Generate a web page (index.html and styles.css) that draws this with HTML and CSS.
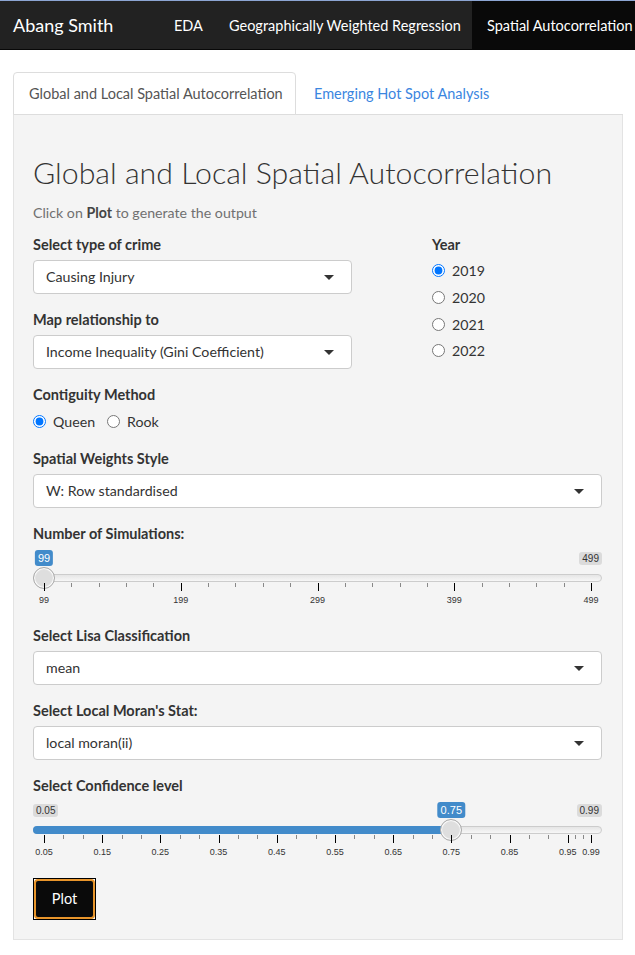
FILE: index.html
```html
<!DOCTYPE html>
<html lang="en">
<head>
<meta charset="utf-8">
<title>Abang Smith</title>
<link rel="stylesheet" href="styles.css">
</head>
<body>
<div class="topline"></div>
<nav class="navbar">
  <span class="brand">Abang Smith</span>
  <ul class="nav">
    <li class="nav-eda">EDA</li>
    <li class="nav-gwr">Geographically Weighted Regression</li>
    <li class="nav-sa active">Spatial Autocorrelation</li>
  </ul>
</nav>

<main class="container">
  <ul class="tabs">
    <li class="tab active">Global and Local Spatial Autocorrelation</li>
    <li class="tab">Emerging Hot Spot Analysis</li>
  </ul>

  <div class="well">
    <h2 class="title">Global and Local Spatial Autocorrelation</h2>
    <p class="hint">Click on <b>Plot</b> to generate the output</p>

    <div class="row">
      <div class="col-left">
        <div class="group">
          <label class="ctl-label">Select type of crime</label>
          <div class="select">Causing Injury</div>
        </div>
        <div class="group">
          <label class="ctl-label">Map relationship to</label>
          <div class="select">Income Inequality (Gini Coefficient)</div>
        </div>
      </div>
      <div class="col-right">
        <label class="ctl-label">Year</label>
        <div class="radio-stack">
          <label class="radio"><input type="radio" name="year" checked><span>2019</span></label>
          <label class="radio"><input type="radio" name="year"><span>2020</span></label>
          <label class="radio"><input type="radio" name="year"><span>2021</span></label>
          <label class="radio"><input type="radio" name="year"><span>2022</span></label>
        </div>
      </div>
    </div>

    <div class="group">
      <label class="ctl-label">Contiguity Method</label>
      <div class="radio-inline-row">
        <label class="radio"><input type="radio" name="cont" checked><span>Queen</span></label>
        <label class="radio"><input type="radio" name="cont"><span>Rook</span></label>
      </div>
    </div>

    <div class="group">
      <label class="ctl-label">Spatial Weights Style</label>
      <div class="select">W: Row standardised</div>
    </div>

    <div class="group">
      <label class="ctl-label">Number of Simulations:</label>
      <div class="slider">
        <div class="irs-line"></div>
        <span class="irs-max">499</span>
        <div class="irs-area">
          <span class="irs-single" style="left:0%">99</span>
          <span class="irs-handle" style="left:0%"></span>
          <div class="irs-grid">
            <span class="pol big" style="left:0%"></span>
            <span class="pol" style="left:5%"></span>
            <span class="pol" style="left:10%"></span>
            <span class="pol" style="left:15%"></span>
            <span class="pol" style="left:20%"></span>
            <span class="pol big" style="left:25%"></span>
            <span class="pol" style="left:30%"></span>
            <span class="pol" style="left:35%"></span>
            <span class="pol" style="left:40%"></span>
            <span class="pol" style="left:45%"></span>
            <span class="pol big" style="left:50%"></span>
            <span class="pol" style="left:55%"></span>
            <span class="pol" style="left:60%"></span>
            <span class="pol" style="left:65%"></span>
            <span class="pol" style="left:70%"></span>
            <span class="pol big" style="left:75%"></span>
            <span class="pol" style="left:80%"></span>
            <span class="pol" style="left:85%"></span>
            <span class="pol" style="left:90%"></span>
            <span class="pol" style="left:95%"></span>
            <span class="pol big" style="left:100%"></span>
            <span class="gtext" style="left:0%">99</span>
            <span class="gtext" style="left:25%">199</span>
            <span class="gtext" style="left:50%">299</span>
            <span class="gtext" style="left:75%">399</span>
            <span class="gtext" style="left:100%">499</span>
          </div>
        </div>
      </div>
    </div>

    <div class="group">
      <label class="ctl-label">Select Lisa Classification</label>
      <div class="select">mean</div>
    </div>

    <div class="group">
      <label class="ctl-label">Select Local Moran's Stat:</label>
      <div class="select">local moran(ii)</div>
    </div>

    <div class="group group-last">
      <label class="ctl-label">Select Confidence level</label>
      <div class="slider">
        <div class="irs-line"></div>
        <span class="irs-min">0.05</span>
        <span class="irs-max">0.99</span>
        <div class="irs-area">
          <div class="irs-bar" style="width:calc(74.468% + 11px)"></div>
          <span class="irs-single" style="left:74.468%">0.75</span>
          <span class="irs-handle" style="left:74.468%"></span>
          <div class="irs-grid">
            <span class="pol big" style="left:0%"></span>
            <span class="pol" style="left:3.546%"></span>
            <span class="pol" style="left:7.092%"></span>
            <span class="pol big" style="left:10.638%"></span>
            <span class="pol" style="left:14.184%"></span>
            <span class="pol" style="left:17.730%"></span>
            <span class="pol big" style="left:21.277%"></span>
            <span class="pol" style="left:24.823%"></span>
            <span class="pol" style="left:28.369%"></span>
            <span class="pol big" style="left:31.915%"></span>
            <span class="pol" style="left:35.461%"></span>
            <span class="pol" style="left:39.007%"></span>
            <span class="pol big" style="left:42.553%"></span>
            <span class="pol" style="left:46.099%"></span>
            <span class="pol" style="left:49.645%"></span>
            <span class="pol big" style="left:53.191%"></span>
            <span class="pol" style="left:56.738%"></span>
            <span class="pol" style="left:60.284%"></span>
            <span class="pol big" style="left:63.830%"></span>
            <span class="pol" style="left:67.376%"></span>
            <span class="pol" style="left:70.922%"></span>
            <span class="pol big" style="left:74.468%"></span>
            <span class="pol" style="left:78.014%"></span>
            <span class="pol" style="left:81.560%"></span>
            <span class="pol big" style="left:85.106%"></span>
            <span class="pol" style="left:88.652%"></span>
            <span class="pol" style="left:92.199%"></span>
            <span class="pol big" style="left:95.745%"></span>
            <span class="pol" style="left:97.163%"></span>
            <span class="pol" style="left:98.582%"></span>
            <span class="pol big" style="left:100%"></span>
            <span class="gtext" style="left:0%">0.05</span>
            <span class="gtext" style="left:10.638%">0.15</span>
            <span class="gtext" style="left:21.277%">0.25</span>
            <span class="gtext" style="left:31.915%">0.35</span>
            <span class="gtext" style="left:42.553%">0.45</span>
            <span class="gtext" style="left:53.191%">0.55</span>
            <span class="gtext" style="left:63.830%">0.65</span>
            <span class="gtext" style="left:74.468%">0.75</span>
            <span class="gtext" style="left:85.106%">0.85</span>
            <span class="gtext" style="left:95.745%">0.95</span>
            <span class="gtext" style="left:100%">0.99</span>
          </div>
        </div>
      </div>
    </div>

    <div class="plot-ring"><button class="btn-plot" type="button">Plot</button></div>
  </div>
</main>
</body>
</html>
```

FILE: styles.css
```css
* { box-sizing: border-box; }
html, body { margin: 0; padding: 0; }
body {
  width: 635px;
  background: #fff;
  color: #333;
  font-family: Lato, "Liberation Sans", sans-serif;
  font-size: 14px;
}

.topline { height: 1px; background: #8ca5d3; }

/* Navbar */
.navbar {
  display: flex;
  height: 49px;
  background: #222;
  border-bottom: 1px solid #080808;
  overflow: hidden;
}
.brand {
  flex: none;
  width: 159px;
  padding-left: 13px;
  color: #fff;
  font-size: 18px;
  line-height: 48px;
  white-space: nowrap;
}
.nav {
  display: flex;
  margin: 0;
  padding: 0;
  list-style: none;
}
.nav li {
  flex: none;
  padding: 0 15px;
  color: #fff;
  font-size: 14.5px;
  line-height: 50px;
  white-space: nowrap;
}
.nav .nav-eda { width: 55px; }
.nav .nav-gwr { width: 258px; }
.nav .nav-sa { width: 176px; }
.nav .active { background: #090909; }

/* Tabs */
.container { margin: 22px 12px 0 13px; }
.tabs {
  display: flex;
  height: 43px;
  margin: 0;
  padding: 0;
  list-style: none;
  border-bottom: 1px solid #ddd;
}
.tab {
  height: 43px;
  margin-right: 2px;
  padding: 10px 15px;
  border: 1px solid transparent;
  border-radius: 4px 4px 0 0;
  color: #3b86df;
  font-size: 14.5px;
  line-height: 21px;
  white-space: nowrap;
}
.tab.active {
  width: 283px;
  background: #fff;
  border-color: #ddd;
  color: #555;
}

/* Well */
.well {
  padding: 19px 20px 19px 19px;
  background: #f4f4f4;
  border: 1px solid #e3e3e3;
  border-top: none;
}
.title {
  margin: 20px 0 12px;
  color: #333;
  font-size: 30.3px;
  font-weight: 300;
  line-height: 36px;
}
.hint {
  margin: 0 0 10.5px;
  color: #707070;
  font-size: 14.2px;
  line-height: 21px;
}
.hint b { color: #444; }

.row {
  display: grid;
  grid-template-columns: 319px 1fr;
  column-gap: 80px;
}

.group { margin-bottom: 15px; }
.ctl-label {
  display: block;
  margin-bottom: 5px;
  font-size: 14.5px;
  font-weight: 700;
  line-height: 21.4px;
}

.select {
  position: relative;
  height: 34px;
  padding: 0 12px;
  background: #fff;
  border: 1px solid #ccc;
  border-radius: 4px;
  color: #333;
  font-size: 14.2px;
  line-height: 32px;
}
.select::after {
  content: "";
  position: absolute;
  right: 17px;
  top: 14px;
  border-style: solid;
  border-width: 5px 5px 0;
  border-color: #333 transparent transparent;
}

/* Radios */
.radio {
  display: flex;
  align-items: center;
  gap: 7px;
  font-size: 14.2px;
  color: #333;
}
.radio input {
  width: 13px;
  height: 13px;
  margin: 0;
  accent-color: #0075ff;
}
.radio-stack {
  display: flex;
  flex-direction: column;
  gap: 8.6px;
  padding-top: 2px;
}
.radio-stack .radio { height: 18px; }
.radio-inline-row {
  display: flex;
  gap: 12px;
  height: 22px;
}

/* Sliders */
.slider {
  position: relative;
  height: 60px;
  font-family: "Liberation Sans", Arial, sans-serif;
}
.irs-line {
  position: absolute;
  left: 0;
  right: 0;
  top: 24px;
  height: 8px;
  border: 1px solid #ccc;
  border-radius: 16px;
  background: linear-gradient(#dddddd -50%, #ffffff 150%);
}
.irs-area {
  position: absolute;
  left: 11px;
  right: 11px;
  top: 0;
  bottom: 0;
}
.irs-bar {
  position: absolute;
  left: -11px;
  top: 24px;
  height: 8px;
  background: #428bca;
  border-radius: 16px 0 0 16px;
}
.irs-handle {
  position: absolute;
  top: 17px;
  width: 22px;
  height: 22px;
  transform: translateX(-50%);
  background: #dedede;
  border: 1px solid #ababab;
  border-radius: 50%;
  box-shadow: inset 0 0 1px 1px #fff;
}
.irs-single {
  position: absolute;
  top: 0;
  transform: translateX(-50%);
  padding: 1px 3px;
  background: #428bca;
  border-radius: 3px;
  color: #fff;
  font-size: 11px;
  line-height: 14px;
}
.irs-min, .irs-max {
  position: absolute;
  top: 2px;
  padding: 0 3px;
  background: rgba(0, 0, 0, 0.1);
  border-radius: 3px;
  color: #333;
  font-size: 10px;
  line-height: 13px;
}
.irs-min { left: 0; }
.irs-max { right: 0; }
.irs-grid {
  position: absolute;
  left: 0;
  right: 0;
  top: 33px;
  height: 20px;
}
.pol {
  position: absolute;
  top: 0;
  width: 1px;
  height: 4px;
  background: #888;
}
.pol.big { height: 8px; background: #000; }
.gtext {
  position: absolute;
  top: 12px;
  transform: translateX(-50%);
  color: #333;
  font-size: 9px;
  line-height: 11px;
  white-space: nowrap;
}
.group-last { margin-bottom: 16px; }

/* Plot button */
.plot-ring {
  display: inline-block;
  border: 1px solid #000;
  background: #fff;
  line-height: 0;
}
.btn-plot {
  display: block;
  width: 61px;
  height: 40px;
  padding: 0;
  background: #0a0a0a;
  border: 2px solid #e8952b;
  border-radius: 4px;
  color: #fff;
  font-family: Lato, "Liberation Sans", sans-serif;
  font-size: 14.5px;
  line-height: 36px;
}
```
